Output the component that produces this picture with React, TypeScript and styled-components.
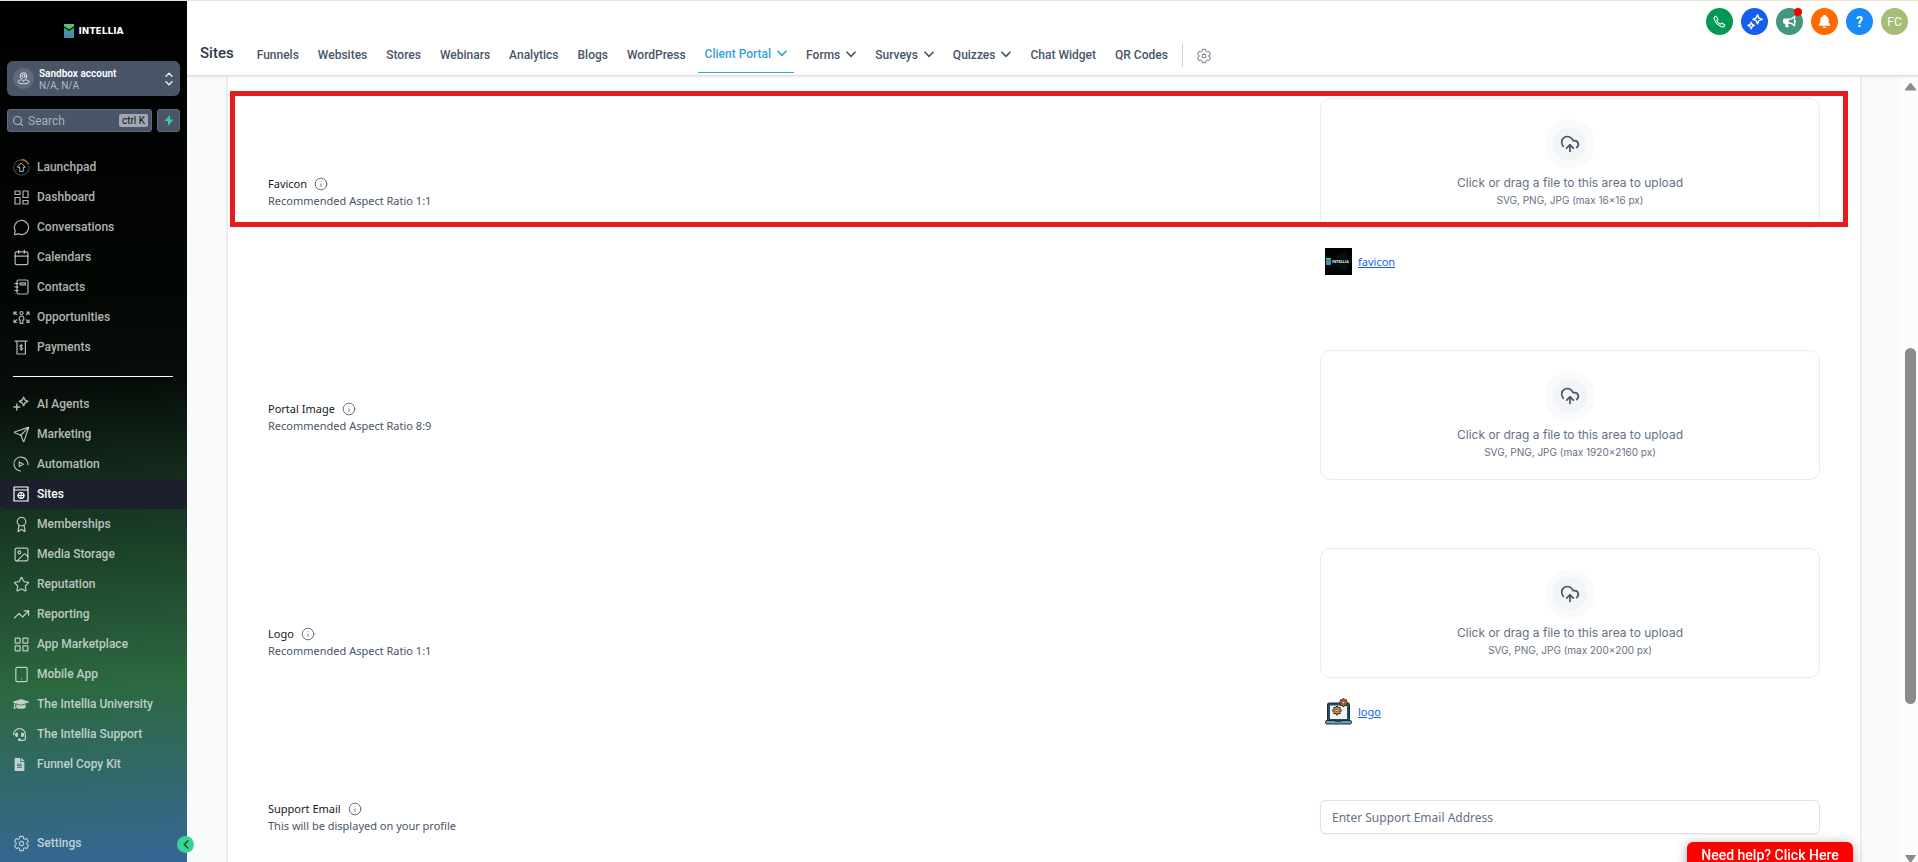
import React from "react";
import styled, { createGlobalStyle, css } from "styled-components";
import {
  Award,
  Calendar,
  Image as ImageIcon,
  Info,
  LayoutGrid,
  MessageCircle,
  Search,
  Send,
  Star,
  Tablet,
  TrendingUp,
  CloudUpload,
} from "lucide-react";
import { IoSettingsOutline, IoNotificationsSharp } from "react-icons/io5";
import { FaGraduationCap, FaHeadset, FaFileAlt, FaBullhorn } from "react-icons/fa";

const UI = `Roboto, "Liberation Sans", sans-serif`;
const FORM = `"Noto Sans", "Open Sans", sans-serif`;

const GlobalStyle = createGlobalStyle`
  *, *::before, *::after { box-sizing: border-box; }
  body { margin: 0; font-family: ${UI}; color: #344054; background: #fff; }
  button, input { font: inherit; color: inherit; }
  button { border: 0; padding: 0; background: none; cursor: pointer; }
  a { color: inherit; text-decoration: none; }
  h1, p { margin: 0; }
  svg { display: block; flex: none; }
`;

/* ---------- page shell ---------- */

const Page = styled.div`
  display: flex;
  height: 100vh;
  overflow: hidden;
  border-top: 1px solid #f0decf;
`;

const Sidebar = styled.aside`
  position: relative;
  display: flex;
  flex-direction: column;
  flex: none;
  width: 187px;
  padding-bottom: 4px;
  background: linear-gradient(
    176deg,
    #000 0%,
    #030704 34%,
    #070e09 45%,
    #15301f 57%,
    #2c6840 79%,
    #30695c 86%,
    #356796 100%
  );
`;

const Main = styled.div`
  display: flex;
  flex-direction: column;
  flex: 1;
  min-width: 0;
`;

/* ---------- sidebar ---------- */

const Brand = styled.a`
  display: flex;
  align-items: center;
  justify-content: center;
  gap: 5px;
  flex: none;
  height: 60px;
  color: #fff;
  font: bold 9px/12px "DejaVu Sans", sans-serif;
`;

const AccountButton = styled.button`
  display: flex;
  align-items: center;
  gap: 5px;
  flex: none;
  height: 35px;
  margin: 0 7px;
  padding: 0 7px 0 6px;
  border-radius: 6px;
  background: #4a5568;
  color: #e4e7ec;
  text-align: left;
`;

const Avatar = styled.span`
  display: grid;
  place-items: center;
  width: 21px;
  height: 21px;
  border-radius: 50%;
  background: #626b7b;
`;

const AccountText = styled.span`
  flex: 1;
  padding-top: 2px;
  font-size: 10px;
  line-height: 12px;
  color: #b3b8c1;
  strong {
    display: block;
    font-weight: 600;
    color: #fff;
  }
`;

const SearchRow = styled.div`
  display: flex;
  gap: 5px;
  flex: none;
  margin: 13px 7px 20px;
`;

const SearchBox = styled.label`
  display: flex;
  align-items: center;
  gap: 4px;
  flex: 1;
  min-width: 0;
  height: 23px;
  padding: 0 3px 0 4px;
  border: 1px solid #5f697a;
  border-radius: 3px;
  background: #4a5568;
  color: #b0b5be;
  input {
    flex: 1;
    min-width: 0;
    width: 0;
    padding: 0;
    border: 0;
    outline: 0;
    background: none;
    font-size: 12px;
    line-height: 16px;
  }
  input::placeholder { color: #a9afb9; opacity: 1; }
  kbd {
    padding: 0 3px;
    border-radius: 2px;
    background: #a0a7b2;
    color: #111;
    font: 10px/13px ${UI};
  }
`;

const QuickButton = styled.button`
  display: grid;
  place-items: center;
  width: 23px;
  height: 23px;
  border: 1px solid #5f697a;
  border-radius: 3px;
  background: #4a5568;
  color: #34d399;
`;

const MenuList = styled.nav`
  display: flex;
  flex-direction: column;
  flex: none;
`;

const MenuItem = styled.a<{ $active?: boolean }>`
  display: flex;
  align-items: center;
  gap: 8px;
  flex: none;
  height: 30px;
  padding-left: 13px;
  border-radius: 5px;
  font-size: 12px;
  line-height: 16px;
  font-weight: 500;
  color: rgba(255, 255, 255, 0.7);
  ${(p) =>
    p.$active &&
    css`
      background: #1c202d;
      color: #fff;
    `}
`;

const MenuIcon = styled.span<{ $start?: boolean }>`
  display: flex;
  align-items: center;
  justify-content: ${(p) => (p.$start ? "flex-start" : "center")};
  width: 16px;
  height: 16px;
`;

const Divider = styled.hr`
  flex: none;
  width: auto;
  height: 1px;
  margin: 14px 14px 12px 13px;
  border: 0;
  background: #fff;
`;

const SidebarFoot = styled.div`
  margin-top: auto;
`;

const CollapseButton = styled.button`
  position: absolute;
  z-index: 2;
  right: -7px;
  bottom: 9px;
  display: grid;
  place-items: center;
  width: 17px;
  height: 17px;
  border-radius: 50%;
  background: #37d399;
  color: #14532d;
`;

/* ---------- header ---------- */

const Header = styled.header`
  position: relative;
  z-index: 1;
  flex: none;
  padding-top: 7px;
  border-bottom: 1px solid #dcdee2;
  box-shadow: 0 1px 2px rgba(16, 24, 40, 0.1);
  background: #fff;
`;

const Actions = styled.div`
  display: flex;
  justify-content: flex-end;
  gap: 8px;
  padding-right: 10px;
`;

const RoundButton = styled.button<{ $tone: string }>`
  position: relative;
  display: grid;
  place-items: center;
  width: 27px;
  height: 27px;
  border-radius: 50%;
  background: ${(p) => p.$tone};
  color: #fff;
  font-size: 12px;
  line-height: 16px;
`;

const QuestionMark = styled.b`
  font-size: 14px;
`;

const Dot = styled.span`
  position: absolute;
  top: 0;
  right: 1px;
  width: 8px;
  height: 8px;
  border-radius: 50%;
  background: #f00;
`;

const TabBar = styled.nav`
  display: flex;
  align-items: flex-start;
  height: 40px;
  padding-left: 13px;
`;

const Title = styled.h1`
  margin-right: 16px;
  font-size: 15px;
  line-height: 36px;
  font-weight: 500;
  color: #2d3748;
`;

const Tabs = styled.div`
  display: flex;
  gap: 5px;
`;

const Tab = styled.a<{ $active?: boolean }>`
  display: flex;
  align-items: center;
  gap: 6px;
  height: ${(p) => (p.$active ? 38 : 40)}px;
  padding: 0 7px;
  border-bottom: 1px solid ${(p) => (p.$active ? "#38a0db" : "transparent")};
  font-size: 12px;
  line-height: 16px;
  font-weight: 500;
  white-space: nowrap;
  color: ${(p) => (p.$active ? "#38a0db" : "#4a5568")};
`;

const TabRule = styled.span`
  width: 1px;
  height: 23px;
  margin: 9px 13px 0 7px;
  background: #cfd2d8;
`;

const GearButton = styled.button`
  height: 42px;
  color: #667085;
`;

/* ---------- content ---------- */

const Body = styled.div`
  display: flex;
  flex: 1;
  min-height: 0;
`;

const Viewport = styled.main`
  flex: 1;
  min-width: 0;
  padding: 0 39px;
  overflow: hidden;
  background: #f9fafc;
`;

const Panel = styled.section`
  display: flex;
  flex-direction: column;
  gap: 64px;
  min-height: 100%;
  padding: 22px 40px 64px;
  border: solid #eaecf0;
  border-width: 0 2px;
  background: #fff;
`;

const FieldRow = styled.div`
  position: relative;
  display: flex;
  align-items: center;
  justify-content: space-between;
`;

const Highlight = styled.span`
  position: absolute;
  inset: -7px -28px auto -38px;
  height: 136px;
  border: 5px solid #e71c1e;
  pointer-events: none;
`;

const FieldText = styled.div`
  font-family: ${FORM};
  font-size: 11px;
  line-height: 17px;
  color: #475467;
`;

const FieldName = styled.div`
  display: flex;
  align-items: center;
  gap: 7px;
  color: #101828;
  svg { color: #667085; }
`;

const Control = styled.div<{ $tail?: number }>`
  width: 500px;
  padding-bottom: ${(p) => p.$tail ?? 0}px;
`;

const DropZone = styled.label`
  display: flex;
  flex-direction: column;
  align-items: center;
  padding: 20px;
  border: 1px solid #eaecf0;
  border-radius: 10px;
  font-family: Inter, sans-serif;
  color: #667085;
  cursor: pointer;
  input {
    position: absolute;
    width: 1px;
    height: 1px;
    opacity: 0;
  }
`;

const UploadBadge = styled.span`
  display: grid;
  place-items: center;
  width: 50px;
  height: 50px;
  margin-bottom: 4px;
  border: 8px solid #f9fafb;
  border-radius: 50%;
  background: #f2f4f7;
  color: #475467;
`;

const DropTitle = styled.span`
  font-size: 12px;
  line-height: 20px;
`;

const DropHint = styled.span`
  font-size: 10px;
  line-height: 14px;
`;

const FileLine = styled.div`
  display: flex;
  align-items: center;
  gap: 6px;
  margin-top: 20px;
  padding-left: 5px;
  font-family: ${FORM};
  font-size: 11px;
  line-height: 17px;
  a { color: #155eef; text-decoration: underline; }
`;

const EmailInput = styled.input`
  display: block;
  width: 100%;
  height: 34px;
  padding: 0 11px;
  border: 1px solid #dfe1e7;
  border-radius: 6px;
  box-shadow: 0 1px 2px rgba(16, 24, 40, 0.05);
  font-family: ${FORM};
  font-size: 12px;
  &::placeholder { color: #667085; opacity: 1; }
`;

const ScrollRail = styled.div`
  display: flex;
  flex-direction: column;
  align-items: center;
  flex: none;
  width: 17px;
  padding: 6px 0 0 2px;
  background: #fcfcfc;
  color: #8b8b8b;
`;

const RailTrack = styled.div`
  display: flex;
  flex-direction: column;
  flex: 1;
`;

const RailThumb = styled.div`
  flex: 356;
  width: 11px;
  border-radius: 6px;
  background: #8b8b8b;
`;

const RailSpace = styled.div<{ $share: number }>`
  flex: ${(p) => p.$share};
`;

const HelpButton = styled.button`
  position: fixed;
  z-index: 3;
  right: 65px;
  bottom: -6px;
  height: 26px;
  width: 166px;
  border-radius: 6px 6px 0 0;
  background: #f00;
  color: #fff;
  font-size: 14px;
  line-height: 26px;
  font-weight: 500;
  box-shadow: 0 2px 12px rgba(0, 0, 0, 0.35);
`;

/* ---------- drawings ---------- */

const line = {
  fill: "none",
  stroke: "currentColor",
  strokeWidth: 1.2,
  strokeLinecap: "round" as const,
  strokeLinejoin: "round" as const,
};

const BrandMark = ({ id }: { id: string }) => (
  <svg width="10" height="14" viewBox="0 0 10 14">
    <defs>
      <linearGradient id={id} x1="0" y1="0" x2="0" y2="1">
        <stop offset="0" stopColor="#43a878" />
        <stop offset="1" stopColor="#4382c6" />
      </linearGradient>
    </defs>
    <path d="M0 3.6 5 7l5-3.4V14H0z" fill={`url(#${id})`} />
    <path d="M0 0h10v2.2L5 5.6 0 2.2z" fill="#55c07a" />
  </svg>
);

const ChevronDown = () => (
  <svg width="10" height="7" viewBox="0 0 10 7">
    <path d="M1 1.2 5 5.4 9 1.2" {...line} strokeWidth={1.6} />
  </svg>
);

const LaunchIcon = () => (
  <svg width="17" height="17" viewBox="0 0 17 17">
    <circle cx="8.500" cy="8.500" r="7.700" fill="none" stroke="#3c4043" strokeWidth="1.200" />
    <path d="M8.500.8a7.700 7.700 0 0 1 7 4.500" fill="none" stroke="#c2662a" strokeWidth="1.400" />
    <path d="M8.500 4.200 12.300 8.200h-2V12.400H6.700V8.200h-2z" {...line} strokeWidth={1} />
  </svg>
);

const DashboardIcon = () => (
  <svg width="15" height="15" viewBox="0 0 15 15">
    <path d="M1 1h5v3.500H1zM1 7.500h5V14H1zM9 1h5v6.500H9zM9 10.500h5V14H9z" {...line} />
  </svg>
);

const ContactsIcon = () => (
  <svg width="15" height="16" viewBox="0 0 15 16">
    <g {...line}>
      <rect x="3" y="1" width="11" height="14" rx="1.500" />
      <rect x="6" y="3.800" width="5.500" height="2" rx=".4" />
      <path d="M1 4.500h3M1 8h3M1 11.500h3" />
    </g>
  </svg>
);

const OpportunitiesIcon = () => (
  <svg width="17" height="15" viewBox="0 0 17 15">
    <g {...line}>
      <circle cx="8.500" cy="3" r="1.500" />
      <path d="M8.500 6c-1.600 0-2.300 1-2.300 2.300V10h1v3.300h2.600V10h1V8.300C10.800 7 10.100 6 8.500 6z" />
      <path d="M1 4.500V2.200h2.300M1.200 2.400l2.400 2.300M16 4.500V2.200h-2.300M15.800 2.400l-2.400 2.300M1 10v2.300h2.300M1.200 12.100l2.400-2.300M16 10v2.300h-2.300M15.800 12.100l-2.400-2.300" />
    </g>
  </svg>
);

const PaymentsIcon = () => (
  <svg width="14" height="15" viewBox="0 0 14 15">
    <g {...line}>
      <path d="M1 1.200h12M3 1.200V14h8.400V1.200" />
      <path d="M8.800 5.700c-.4-.6-3-.8-3 .6s3 .8 3 2.200-2.700 1.300-3.200.5M7.200 4.200v6.400" strokeWidth="1" />
    </g>
  </svg>
);

const AgentsIcon = () => (
  <svg width="16" height="16" viewBox="0 0 16 16">
    <path
      d="M10.600 1.200 12 4l2.900 1.400L12 6.800 10.600 9.700 9.200 6.800 6.300 5.400 9.200 4zM3.800 8v6M.9 11h5.900"
      {...line}
      strokeWidth={1.4}
    />
  </svg>
);

const AutomationIcon = () => (
  <svg width="16" height="16" viewBox="0 0 16 16">
    <g {...line}>
      <path d="M7.500 15A7 7 0 1 1 14.900 8.700" strokeDasharray="11 1.500 30" />
      <path d="M6.300 6v4.600l4-2.300z" />
    </g>
  </svg>
);

const SitesIcon = () => (
  <svg width="16" height="16" viewBox="0 0 16 16">
    <g {...line}>
      <path d="M1 1h14v14H1zM1 4h14" />
      <circle cx="8" cy="9.500" r="3" />
      <path d="M5 9.500h6M8 6.500v6" />
    </g>
  </svg>
);

const PersonPinIcon = () => (
  <svg width="13" height="13" viewBox="0 0 13 13">
    <g {...line} strokeWidth={1}>
      <circle cx="6.500" cy="4" r="1.500" />
      <path d="M6.500 9.200C4 6.800 3.200 5.400 3.200 4a3.300 3.300 0 0 1 6.600 0c0 1.400-.8 2.800-3.300 5.200z" />
      <path d="M3.600 8C2 8.400 1 9 1 9.800c0 1.200 2.400 2 5.500 2s5.500-.8 5.500-2c0-.8-1-1.400-2.600-1.800" />
    </g>
  </svg>
);

const UpDownIcon = () => (
  <svg width="8" height="14" viewBox="0 0 8 14">
    <path d="M1 4.300 4 1.300l3 3M1 9.700l3 3 3-3" {...line} strokeWidth={1.5} />
  </svg>
);

const BoltIcon = () => (
  <svg width="10" height="11" viewBox="0 0 10 11">
    <path d="M5.800 0 .6 6.100h3.500L3.900 11 9.400 4.600H6z" fill="currentColor" />
  </svg>
);

const PhoneIcon = () => (
  <svg width="13" height="13" viewBox="0 0 24 24">
    <path
      d="M4 2.500c-1.700 1.300-2.300 3.400-1.500 5.700 2 6 6.800 11 13 13.300 2.600.9 4.900.2 6-1.800.3-.6.200-1.200-.4-1.600l-4.300-2.900c-.5-.3-1.100-.2-1.500.2l-1.600 1.700c-3-1.400-5.300-3.700-6.800-6.600l1.700-1.600c.4-.4.500-1 .2-1.500L5.800 2.700C5.400 2.100 4.600 2 4 2.500z"
      {...line}
      strokeWidth={2}
    />
  </svg>
);

const SparklesIcon = () => (
  <svg width="16" height="16" viewBox="0 0 16 16">
    <path
      d="M10.500.8 11.800 4l3.400 1.300-3.400 1.400-1.300 3.200-1.400-3.200-3.200-1.400L9.100 4zM4.200 8.300l.9 2.200 2.200.9-2.200 1-.9 2.300-1-2.300-2.300-1 2.300-.9z"
      {...line}
      strokeWidth={1.4}
    />
  </svg>
);

const FaviconThumb = () => (
  <svg width="27" height="27" viewBox="0 0 27 27">
    <rect width="27" height="27" fill="#020403" />
    <path d="M9 14c3-6 7-10 11-10 3 2 3 9 2 17-4 3-8 1-13-7z" fill="#07110e" />
    <path d="M1 11.500 3.500 13 6 11.500V17H1z" fill="#4590bd" />
    <path d="M1 10h5v1.200L3.500 12.800 1 11.200z" fill="#55c07a" />
    <text x="7" y="15" fontSize="4" fontWeight="700" fontFamily="Roboto, sans-serif" fill="#e8edf0">
      INTELLIA
    </text>
  </svg>
);

const Cog = ({ x, y, r, fill }: { x: number; y: number; r: number; fill: string }) => (
  <g transform={`translate(${x} ${y}) scale(${r})`}>
    <path
      d="M0-4.300V4.300M-4.300 0H4.300M-3-3 3 3M-3 3 3-3"
      stroke="#402c25"
      strokeWidth="2.800"
      strokeLinecap="round"
    />
    <circle r="3.400" fill={fill} stroke="#402c25" strokeWidth=".8" />
    <path d="M0-4.200V4.200M-4.200 0H4.200M-2.900-2.900 2.900 2.900M-2.900 2.900 2.900-2.900" stroke={fill} strokeWidth="1.200" />
    <circle r="1.400" fill="#fff" stroke="#402c25" strokeWidth=".9" />
  </g>
);

const LogoThumb = () => (
  <svg width="27" height="27" viewBox="0 0 27 27">
    <rect x="2.500" y="5" width="22" height="18" rx="1.500" fill="#2f4a5c" stroke="#172b38" />
    <rect x="5" y="7.500" width="17" height="13.500" fill="#eef3f6" />
    <Cog x={18.5} y={4.6} r={0.8} fill="#c96f2c" />
    <Cog x={12} y={12.5} r={0.85} fill="#e0a32b" />
    <rect x=".5" y="22.500" width="26" height="3.500" rx="1.500" fill="#6f9fbe" stroke="#172b38" />
    <path d="M10 22.500h7v1.500h-7z" fill="#2f4a5c" />
  </svg>
);

/* ---------- data ---------- */

type MenuEntry = {
  label: string;
  icon: React.ReactNode;
  active?: boolean;
  start?: boolean;
};

const stroke = { size: 17, strokeWidth: 1.7 };

const primaryMenu: MenuEntry[] = [
  { label: "Launchpad", icon: <LaunchIcon /> },
  { label: "Dashboard", icon: <DashboardIcon /> },
  { label: "Conversations", icon: <MessageCircle {...stroke} /> },
  { label: "Calendars", icon: <Calendar {...stroke} /> },
  { label: "Contacts", icon: <ContactsIcon /> },
  { label: "Opportunities", icon: <OpportunitiesIcon /> },
  { label: "Payments", icon: <PaymentsIcon /> },
];

const secondaryMenu: MenuEntry[] = [
  { label: "AI Agents", icon: <AgentsIcon /> },
  { label: "Marketing", icon: <Send {...stroke} /> },
  { label: "Automation", icon: <AutomationIcon /> },
  { label: "Sites", icon: <SitesIcon />, active: true },
  { label: "Memberships", icon: <Award {...stroke} /> },
  { label: "Media Storage", icon: <ImageIcon {...stroke} /> },
  { label: "Reputation", icon: <Star {...stroke} /> },
  { label: "Reporting", icon: <TrendingUp {...stroke} /> },
  { label: "App Marketplace", icon: <LayoutGrid {...stroke} /> },
  { label: "Mobile App", icon: <Tablet {...stroke} /> },
  { label: "The Intellia University", icon: <FaGraduationCap size={16} />, start: true },
  { label: "The Intellia Support", icon: <FaHeadset size={13} />, start: true },
  { label: "Funnel Copy Kit", icon: <FaFileAlt size={13} />, start: true },
];

const tabs = [
  { label: "Funnels" },
  { label: "Websites" },
  { label: "Stores" },
  { label: "Webinars" },
  { label: "Analytics" },
  { label: "Blogs" },
  { label: "WordPress" },
  { label: "Client Portal", menu: true, active: true },
  { label: "Forms", menu: true },
  { label: "Surveys", menu: true },
  { label: "Quizzes", menu: true },
  { label: "Chat Widget" },
  { label: "QR Codes" },
];

type Upload = {
  id: string;
  name: string;
  note: string;
  hint: string;
  file?: string;
  thumb?: React.ReactNode;
  highlighted?: boolean;
};

const uploads: Upload[] = [
  {
    id: "favicon",
    name: "Favicon",
    note: "Recommended Aspect Ratio 1:1",
    hint: "SVG, PNG, JPG (max 16×16 px)",
    file: "favicon",
    thumb: <FaviconThumb />,
    highlighted: true,
  },
  {
    id: "portal-image",
    name: "Portal Image",
    note: "Recommended Aspect Ratio 8:9",
    hint: "SVG, PNG, JPG (max 1920×2160 px)",
  },
  {
    id: "logo",
    name: "Logo",
    note: "Recommended Aspect Ratio 1:1",
    hint: "SVG, PNG, JPG (max 200×200 px)",
    file: "logo",
    thumb: <LogoThumb />,
  },
];

/* ---------- parts ---------- */

const FieldLabel = ({ id, name, note }: { id: string; name: string; note: string }) => (
  <FieldText>
    <FieldName>
      <label htmlFor={id}>{name}</label>
      <Info size={14} strokeWidth={1.7} />
    </FieldName>
    <p>{note}</p>
  </FieldText>
);

const UploadRow = ({ id, name, note, hint, file, thumb, highlighted }: Upload) => (
  <FieldRow>
    <FieldLabel id={id} name={name} note={note} />
    <Control $tail={file ? 11 : 4}>
      <DropZone>
        <input id={id} type="file" />
        <UploadBadge>
          <CloudUpload size={20} strokeWidth={2} />
        </UploadBadge>
        <DropTitle>Click or drag a file to this area to upload</DropTitle>
        <DropHint>{hint}</DropHint>
      </DropZone>
      {file && (
        <FileLine>
          {thumb}
          <a href={`#${file}`}>{file}</a>
        </FileLine>
      )}
    </Control>
    {highlighted && <Highlight />}
  </FieldRow>
);

const Menu = ({ items }: { items: MenuEntry[] }) => (
  <MenuList>
    {items.map((item) => (
      <MenuItem key={item.label} href="#" $active={item.active}>
        <MenuIcon $start={item.start}>{item.icon}</MenuIcon>
        {item.label}
      </MenuItem>
    ))}
  </MenuList>
);

export default function App() {
  return (
    <>
      <GlobalStyle />
      <Page>
        <Sidebar>
          <Brand href="#">
            <BrandMark id="brand" />
            INTELLIA
          </Brand>
          <AccountButton type="button">
            <Avatar>
              <PersonPinIcon />
            </Avatar>
            <AccountText>
              <strong>Sandbox account</strong>
              N/A, N/A
            </AccountText>
            <UpDownIcon />
          </AccountButton>
          <SearchRow>
            <SearchBox>
              <Search size={12} strokeWidth={2.2} />
              <input type="search" placeholder="Search" aria-label="Search" />
              <kbd>ctrl K</kbd>
            </SearchBox>
            <QuickButton type="button" aria-label="Quick actions">
              <BoltIcon />
            </QuickButton>
          </SearchRow>
          <Menu items={primaryMenu} />
          <Divider />
          <Menu items={secondaryMenu} />
          <SidebarFoot>
            <MenuItem href="#">
              <MenuIcon>
                <IoSettingsOutline size={17} />
              </MenuIcon>
              Settings
            </MenuItem>
          </SidebarFoot>
          <CollapseButton type="button" aria-label="Collapse sidebar">
            <svg width="6" height="9" viewBox="0 0 6 9">
              <path d="M4.800 1 1.200 4.500l3.600 3.500" {...line} strokeWidth={1.5} />
            </svg>
          </CollapseButton>
        </Sidebar>

        <Main>
          <Header>
            <Actions>
              <RoundButton type="button" aria-label="Call" $tone="#059855">
                <PhoneIcon />
              </RoundButton>
              <RoundButton type="button" aria-label="Assistant" $tone="#155eef">
                <SparklesIcon />
              </RoundButton>
              <RoundButton type="button" aria-label="Announcements" $tone="#44967f">
                <FaBullhorn size={13} />
                <Dot />
              </RoundButton>
              <RoundButton type="button" aria-label="Notifications" $tone="#ff6900">
                <IoNotificationsSharp size={15} />
              </RoundButton>
              <RoundButton type="button" aria-label="Help" $tone="#188bf6">
                <QuestionMark>?</QuestionMark>
              </RoundButton>
              <RoundButton type="button" aria-label="Profile" $tone="#a5bd76">
                FC
              </RoundButton>
            </Actions>
            <TabBar>
              <Title>Sites</Title>
              <Tabs>
                {tabs.map((tab) => (
                  <Tab key={tab.label} href="#" $active={tab.active}>
                    {tab.label}
                    {tab.menu && <ChevronDown />}
                  </Tab>
                ))}
              </Tabs>
              <TabRule />
              <GearButton type="button" aria-label="Site settings">
                <IoSettingsOutline size={16} />
              </GearButton>
            </TabBar>
          </Header>

          <Body>
            <Viewport>
              <Panel>
                {uploads.map((u) => (
                  <UploadRow key={u.id} {...u} />
                ))}
                <FieldRow>
                  <FieldLabel
                    id="support-email"
                    name="Support Email"
                    note="This will be displayed on your profile"
                  />
                  <Control>
                    <EmailInput
                      id="support-email"
                      type="email"
                      placeholder="Enter Support Email Address"
                    />
                  </Control>
                </FieldRow>
              </Panel>
            </Viewport>
            <ScrollRail>
              <svg width="13" height="9" viewBox="0 0 13 9">
                <path d="M6.500 1 12 8H1z" fill="currentColor" stroke="currentColor" strokeLinejoin="round" />
              </svg>
              <RailTrack>
                <RailSpace $share={257} />
                <RailThumb />
                <RailSpace $share={151} />
              </RailTrack>
              <svg width="11" height="7" viewBox="0 0 11 7">
                <path d="M0 0h11L6.500 7h-2z" fill="currentColor" />
              </svg>
            </ScrollRail>
          </Body>
        </Main>
        <HelpButton type="button">Need help? Click Here</HelpButton>
      </Page>
    </>
  );
}
